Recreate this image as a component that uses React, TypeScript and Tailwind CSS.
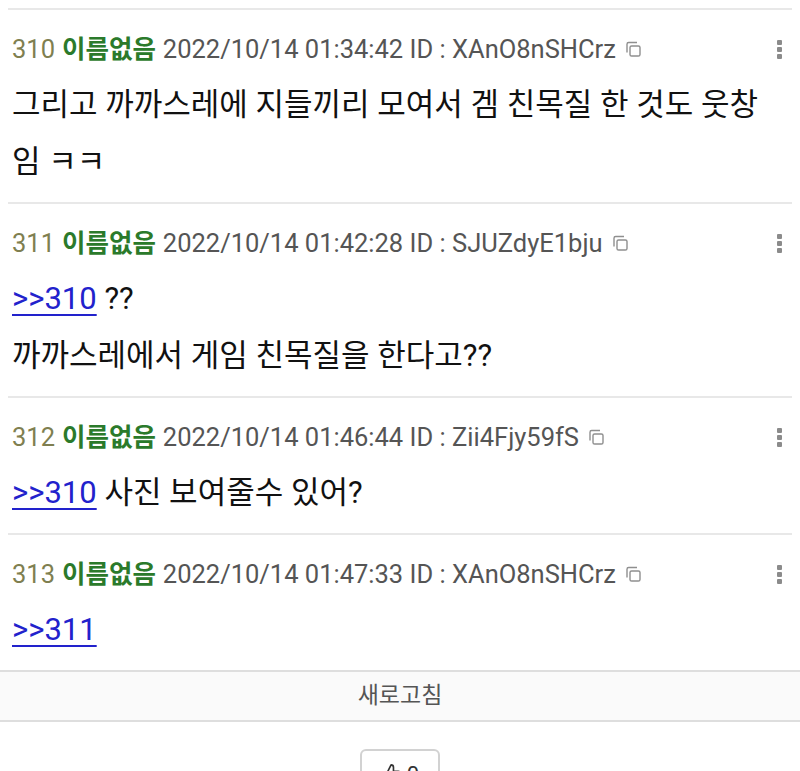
import React from "react";

type Part = { link?: string; text?: string };
type Post = { no: number; date: string; id: string; lines: Part[][] };

const posts: Post[] = [
  {
    no: 310,
    date: "2022/10/14 01:34:42",
    id: "XAnO8nSHCrz",
    lines: [
      [{ text: "그리고 까까스레에 지들끼리 모여서 겜 친목질 한 것도 웃창" }],
      [{ text: "임 ㅋㅋ" }],
    ],
  },
  {
    no: 311,
    date: "2022/10/14 01:42:28",
    id: "SJUZdyE1bju",
    lines: [
      [{ link: ">>310" }, { text: " ??" }],
      [{ text: "까까스레에서 게임 친목질을 한다고??" }],
    ],
  },
  {
    no: 312,
    date: "2022/10/14 01:46:44",
    id: "Zii4Fjy59fS",
    lines: [[{ link: ">>310" }, { text: " 사진 보여줄수 있어?" }]],
  },
  {
    no: 313,
    date: "2022/10/14 01:47:33",
    id: "XAnO8nSHCrz",
    lines: [[{ link: ">>311" }]],
  },
];

function CopyIcon() {
  return (
    <svg width="18" height="18" viewBox="0 0 18 18" fill="none" className="ml-[8px] shrink-0">
      <rect x="6" y="6" width="10" height="10" rx="1.6" stroke="#8f8f8f" strokeWidth="1.4" />
      <path d="M3 12.5V4.2A1.7 1.7 0 0 1 4.7 2.5H13" stroke="#8f8f8f" strokeWidth="1.4" />
    </svg>
  );
}

function Kebab() {
  return (
    <div className="flex flex-col gap-[2px] pr-[6px]">
      <span className="block w-[5px] h-[5px] rounded-[1px] bg-[#8b8b8b]" />
      <span className="block w-[5px] h-[5px] rounded-[1px] bg-[#8b8b8b]" />
      <span className="block w-[5px] h-[5px] rounded-[1px] bg-[#8b8b8b]" />
    </div>
  );
}

function ThumbUp() {
  return (
    <svg width="22" height="22" viewBox="0 0 24 24" fill="none" stroke="#333" strokeWidth="1.8" strokeLinejoin="round">
      <path d="M7 10v11H3V10h4Z" />
      <path d="M7 10l4-8c1.6 0 2.6 1 2.6 2.6V9h5.4a2 2 0 0 1 2 2.3l-1.4 8A2 2 0 0 1 17.6 21H7" />
    </svg>
  );
}

function PostRow({ post, last }: { post: Post; last: boolean }) {
  return (
    <div className={last ? "px-1 pt-[23px] pb-[12px]" : "border-b-2 border-[#e8e8e8] px-1 pt-[23px] pb-[12px]"}>
      <div className="flex items-center h-8 text-[25.5px] leading-8 whitespace-nowrap">
        <span className="text-[#7f7f50]">{post.no}</span>
        <span className="ml-[7px] font-bold text-[#2b7a2b]">이름없음</span>
        <span className="ml-[7px] text-[#555555]">
          {post.date} ID : {post.id}
        </span>
        <CopyIcon />
        <div className="flex-1" />
        <Kebab />
      </div>
      <div className="mt-[11px] text-[31px] leading-[57px] text-[#111111]">
        {post.lines.map((line, i) => (
          <div key={i} className="whitespace-pre">
            {line.map((p, j) =>
              p.link ? (
                <span key={j} className="text-[#2222cc] underline decoration-[2px] underline-offset-[5px]">
                  {p.link}
                </span>
              ) : (
                <span key={j}>{p.text}</span>
              )
            )}
          </div>
        ))}
      </div>
    </div>
  );
}

export default function App() {
  return (
    <div
      className="w-[800px] h-[771px] overflow-hidden bg-white"
      style={{ fontFamily: 'Roboto, "Noto Sans CJK KR", sans-serif' }}
    >
      <div className="mx-2">
        <div className="h-[10px] border-b-2 border-[#e8e8e8]" />
        {posts.map((p, i) => (
          <PostRow key={p.no} post={p} last={i === posts.length - 1} />
        ))}
      </div>
      <div className="h-[52px] flex items-center justify-center bg-[#fafafa] border-y-2 border-[#dedede] text-[23px] text-[#555555]">
        새로고침
      </div>
      <div className="flex justify-center pt-[27px]">
        <div className="w-[80px] h-[50px] border-2 border-[#d2d2d2] rounded-md flex items-center justify-center gap-1 text-[22px] text-[#333]">
          <ThumbUp />
          <span>0</span>
        </div>
      </div>
    </div>
  );
}
